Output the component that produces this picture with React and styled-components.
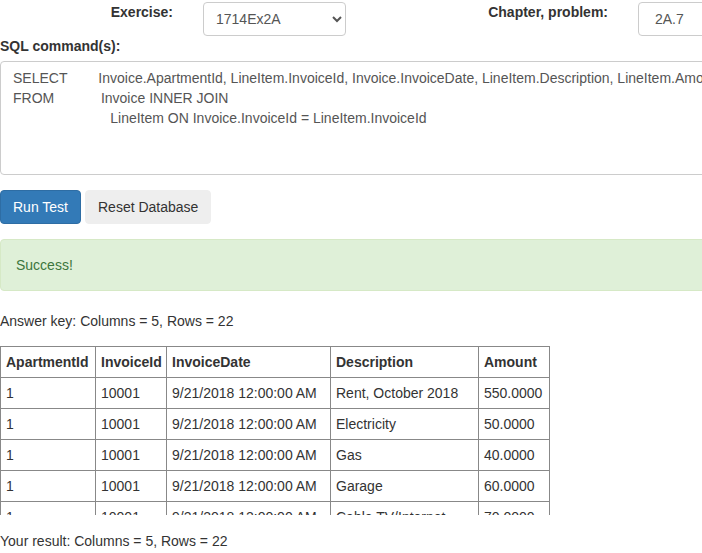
import styled, { createGlobalStyle } from "styled-components";

const Global = createGlobalStyle`
	html {
		overflow: hidden;
	}
	body {
		margin: 0;
		font-family: "Liberation Sans", Arial, sans-serif;
		font-size: 14px;
		line-height: 20px;
		color: #333;
		background: #fff;
	}
	* {
		box-sizing: border-box;
	}
`;

const Page = styled.div`
	width: 1040px;
`;

const TopRow = styled.div`
	display: grid;
	grid-template-columns: 188px 173px 262px 173px;
	padding-top: 2px;
`;

const FieldLabel = styled.label`
	font-weight: bold;
	text-align: right;
	padding-right: 15px;
`;

const Control = styled.div`
	padding: 0 15px;
`;

const Select = styled.select`
	width: 100%;
	height: 34px;
	padding: 6px 12px 6px 8px;
	font: inherit;
	color: #555;
	background: #fff;
	border: 1px solid #ccc;
	border-radius: 4px;
`;

const TextInput = styled.input`
	width: 100%;
	height: 34px;
	padding: 6px 12px 6px 16px;
	font: inherit;
	color: #555;
	border: 1px solid #ccc;
	border-radius: 4px;
`;

const BlockLabel = styled.label`
	display: block;
	font-weight: bold;
	margin-bottom: 5px;
`;

const Sql = styled.textarea`
	display: block;
	width: 100%;
	height: 114px;
	padding: 6px 12px;
	font: inherit;
	line-height: 20px;
	color: #555;
	border: 1px solid #ccc;
	border-radius: 4px;
	resize: none;
	white-space: pre;
	overflow: hidden;
`;

const Buttons = styled.div`
	display: flex;
	gap: 4px;
	margin-top: 15px;
`;

const Button = styled.button`
	height: 34px;
	padding: 6px 12px;
	font: inherit;
	border-radius: 4px;
	border: 1px solid ${(p) => (p.$primary ? "#2e6da4" : "#eee")};
	background: ${(p) => (p.$primary ? "#337ab7" : "#eee")};
	color: ${(p) => (p.$primary ? "#fff" : "#333")};
`;

const Alert = styled.div`
	margin: 15px 0 20px;
	padding: 15px;
	background: #dff0d8;
	border: 1px solid #d6e9c6;
	border-radius: 4px;
	color: #3c763d;
`;

const Info = styled.p`
	margin: 0 0 ${(p) => p.$gap}px;
`;

const TableBox = styled.div`
	height: 169px;
	overflow: hidden;
	margin-bottom: 16px;
`;

const Table = styled.table`
	width: 549px;
	table-layout: fixed;
	border-collapse: collapse;

	th,
	td {
		border: 1px solid #888;
		padding: 5px;
		text-align: left;
		white-space: nowrap;
		overflow: hidden;
	}
	th {
		font-weight: bold;
	}
`;

const Col = styled.col`
	width: ${(p) => p.$w}px;
`;

const widths = [95, 71, 164, 148, 71];

const sql =
	"SELECT        Invoice.ApartmentId, LineItem.InvoiceId, Invoice.InvoiceDate, LineItem.Description, LineItem.Amount\n" +
	"FROM            Invoice INNER JOIN\n" +
	"                         LineItem ON Invoice.InvoiceId = LineItem.InvoiceId";

const rows = [
	["1", "10001", "9/21/2018 12:00:00 AM", "Rent, October 2018", "550.0000"],
	["1", "10001", "9/21/2018 12:00:00 AM", "Electricity", "50.0000"],
	["1", "10001", "9/21/2018 12:00:00 AM", "Gas", "40.0000"],
	["1", "10001", "9/21/2018 12:00:00 AM", "Garage", "60.0000"],
	["1", "10001", "9/21/2018 12:00:00 AM", "Cable TV/Internet", "70.0000"],
	["2", "10002", "9/21/2018 12:00:00 AM", "Rent, October 2018", "725.0000"],
	["2", "10002", "9/21/2018 12:00:00 AM", "Electricity", "65.0000"],
];

export default function App() {
	return (
		<Page>
			<Global />
			<TopRow>
				<FieldLabel>Exercise:</FieldLabel>
				<Control>
					<Select defaultValue="1714Ex2A">
						<option value="1714Ex2A">1714Ex2A</option>
						<option value="1714Ex2B">1714Ex2B</option>
					</Select>
				</Control>
				<FieldLabel>Chapter, problem:</FieldLabel>
				<Control>
					<TextInput type="text" defaultValue="2A.7" />
				</Control>
			</TopRow>
			<BlockLabel>SQL command(s):</BlockLabel>
			<Sql defaultValue={sql} spellCheck={false} />
			<Buttons>
				<Button $primary>Run Test</Button>
				<Button>Reset Database</Button>
			</Buttons>
			<Alert>Success!</Alert>
			<Info $gap={15}>Answer key: Columns = 5, Rows = 22</Info>
			<TableBox>
				<Table>
					<colgroup>
						{widths.map((w, i) => (
							<Col key={i} $w={w} />
						))}
					</colgroup>
					<thead>
						<tr>
							<th>ApartmentId</th>
							<th>InvoiceId</th>
							<th>InvoiceDate</th>
							<th>Description</th>
							<th>Amount</th>
						</tr>
					</thead>
					<tbody>
						{rows.map((r, i) => (
							<tr key={i}>
								{r.map((c, j) => (
									<td key={j}>{c}</td>
								))}
							</tr>
						))}
					</tbody>
				</Table>
			</TableBox>
			<Info $gap={0}>Your result: Columns = 5, Rows = 22</Info>
		</Page>
	);
}
